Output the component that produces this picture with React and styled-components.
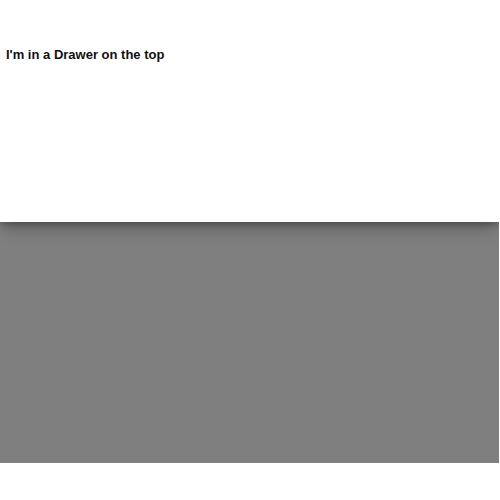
import React from "react";
import styled, { createGlobalStyle } from "styled-components";

const Global = createGlobalStyle`
  html, body { margin: 0; padding: 0; background: #ffffff; }
  body { font-family: "Liberation Sans", Arial, Helvetica, sans-serif; }
`;

const Stage = styled.div`
  position: relative;
  width: 499px;
  height: 463px;
  overflow: hidden;
`;

const Mask = styled.div`
  position: absolute;
  inset: 0;
  background: rgba(0, 0, 0, 0.5);
`;

const Drawer = styled.div`
  position: absolute;
  top: 0;
  left: 0;
  right: 0;
  height: 222px;
  background: #ffffff;
  box-shadow: 0 6px 16px -2px rgba(0, 0, 0, 0.35), 0 2px 6px rgba(0, 0, 0, 0.2);
  padding: 0 6px;
  box-sizing: border-box;
  display: flex;
  flex-direction: column;
`;

const Title = styled.h4`
  margin: 47px 0 0;
  font-size: 13px;
  font-weight: 700;
  line-height: 16px;
  color: #111111;
`;

export default function App() {
  return (
    <>
      <Global />
      <Stage>
        <Mask />
        <Drawer>
          <Title>I'm in a Drawer on the top</Title>
        </Drawer>
      </Stage>
    </>
  );
}
